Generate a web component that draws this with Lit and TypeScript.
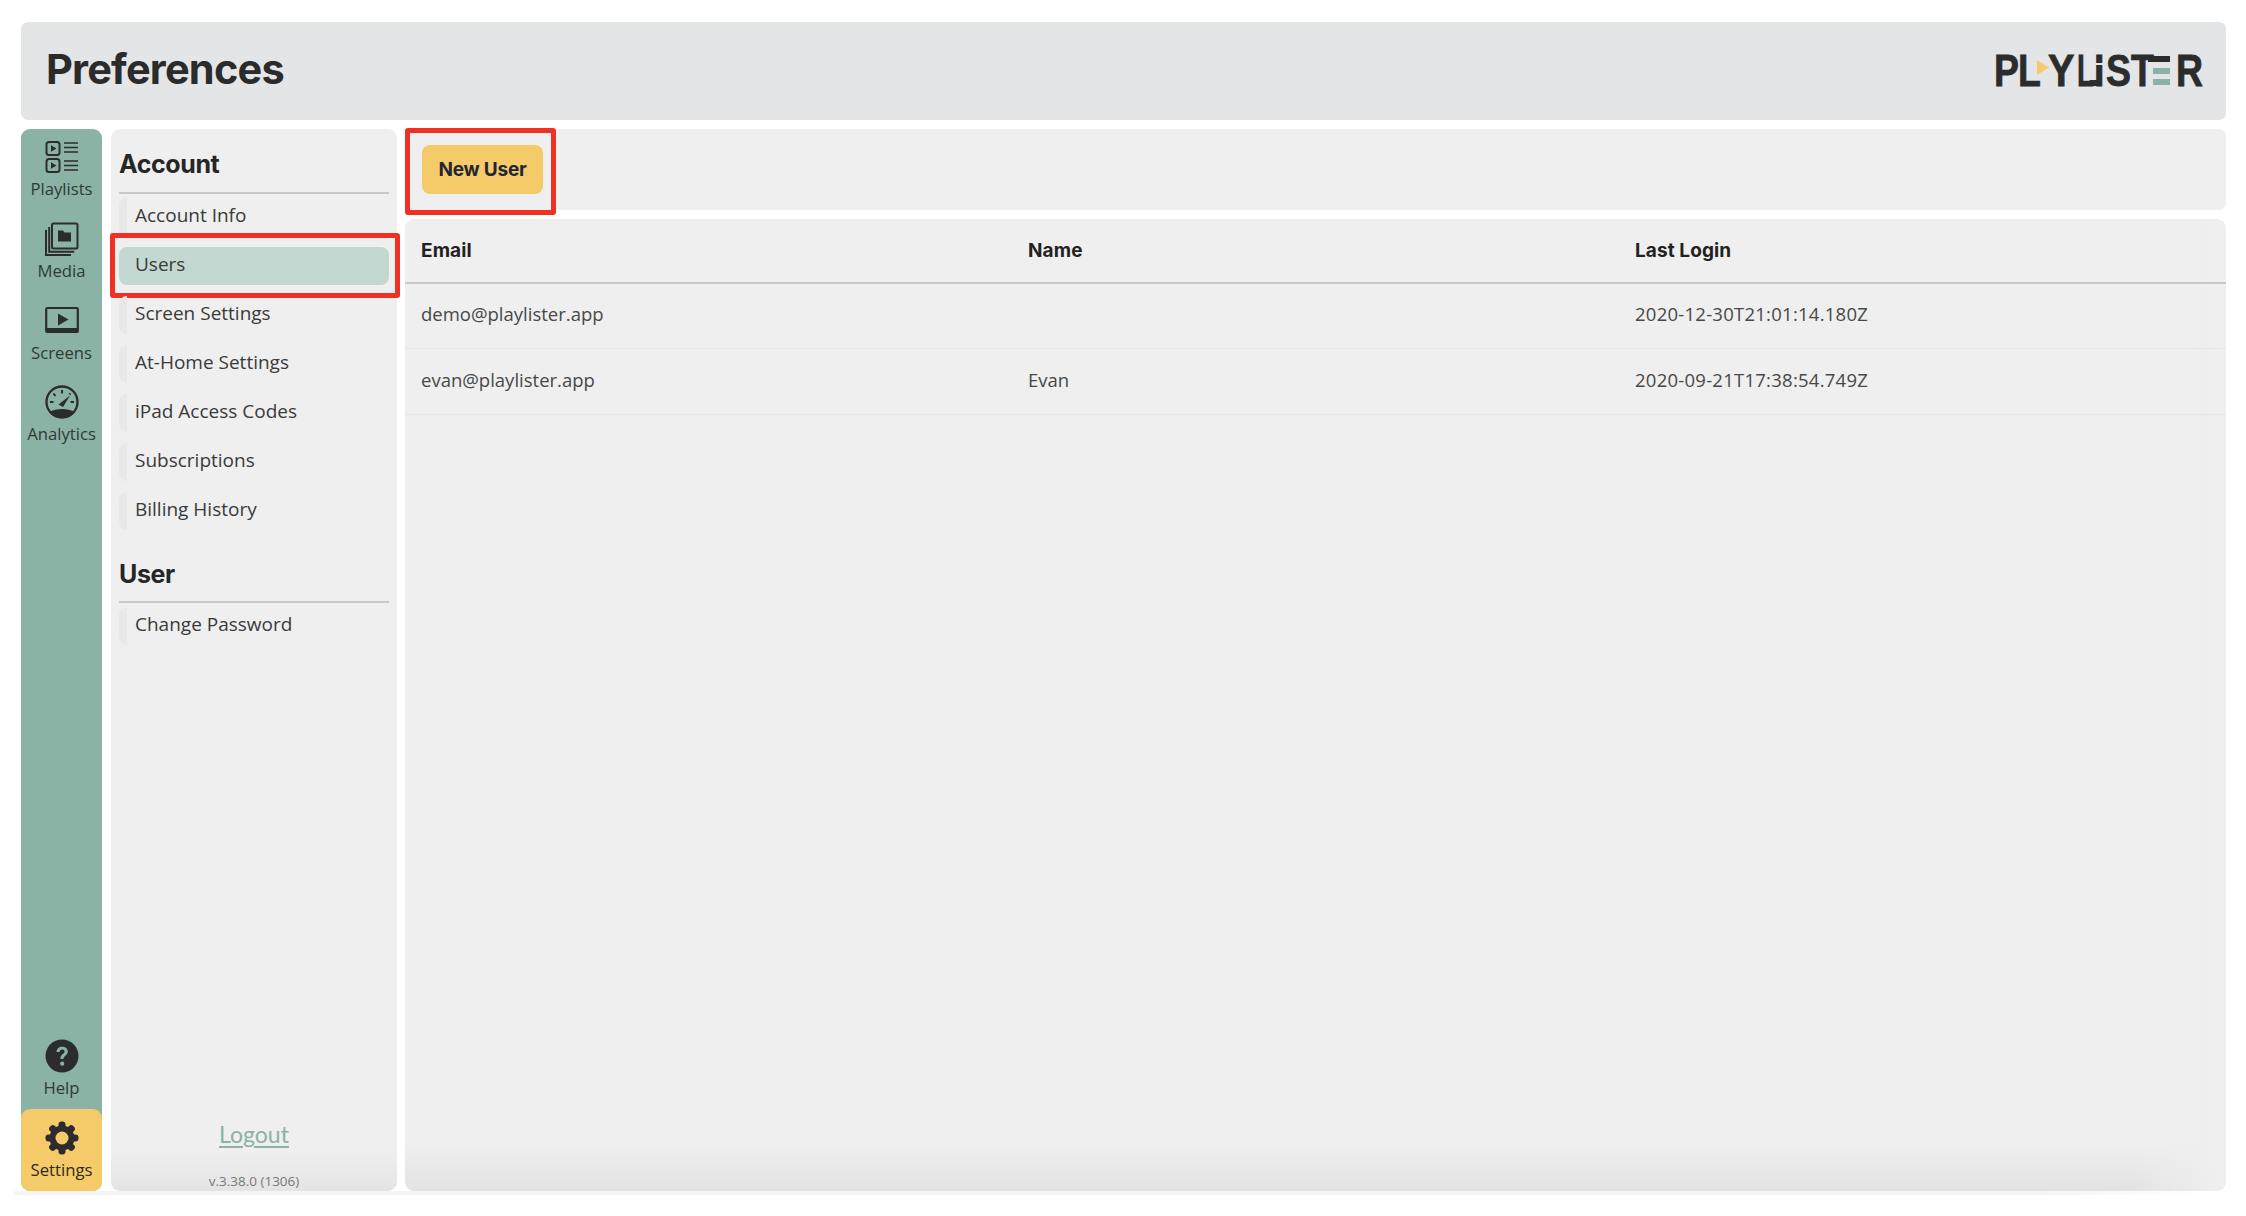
import { LitElement, html, css, svg } from "lit";
import { customElement } from "lit/decorators.js";

const ICONS: Record<string, unknown> = {
  playlists: svg`<svg viewBox="0 0 34 34" width="34" height="34" fill="none" stroke="#2c2c2e"><rect x="1.500" y="2" width="13" height="13" rx="2.500" stroke-width="2"/><path d="M6 5.300l5.500 3.200L6 11.700z" fill="#2c2c2e" stroke="none"/><rect x="1.500" y="19" width="13" height="13" rx="2.500" stroke-width="2"/><path d="M6 22.300l5.500 3.200L6 28.700z" fill="#2c2c2e" stroke="none"/><path d="M19 3h14M19 7.500h14M19 12h14M19 21h14M19 25.500h14M19 30h14" stroke-width="1.700"/></svg>`,
  media: svg`<svg viewBox="0 0 34 34" width="34" height="34" fill="none" stroke="#2c2c2e" stroke-width="2"><rect x="7" y="1.500" width="25.500" height="25" rx="1.500"/><path d="M4.200 5v24.700h25M1 8v25h25" /><path d="M13 8.500h5l1.500 2H26v9H13z" fill="#2c2c2e" stroke="none"/></svg>`,
  screens: svg`<svg viewBox="0 0 34 34" width="34" height="34" fill="none"><rect x="1.200" y="4" width="31.600" height="24" rx="1" stroke="#2c2c2e" stroke-width="2.200"/><rect x="1" y="24" width="32" height="5" fill="#2c2c2e"/><path d="M13 9.500l10.500 6L13 21.500z" fill="#2c2c2e"/></svg>`,
  analytics: svg`<svg viewBox="0 0 34 34" width="34" height="34" fill="none" stroke="#2c2c2e"><circle cx="17" cy="17" r="15.500" stroke-width="2.300"/><path d="M4 27c4-2 8-3 13-3s9 1 13 3c-3 4-8 6-13 6S7 31 4 27z" fill="#2c2c2e" stroke="none"/><path d="M13.500 19.500L25 10.500 18 22z" fill="#2c2c2e" stroke="none"/><path d="M17 5v3.500M8.500 8.500l2 2.500M5 17h3.500M25.500 8.500l-1 1M29 17h-3.500" stroke-width="2"/></svg>`,
  help: svg`<svg viewBox="0 0 34 34" width="34" height="34"><circle cx="17" cy="17" r="16.500" fill="#2c2c2e"/><path d="M11.500 13c0-3.300 2.500-5.300 5.700-5.300 3.200 0 5.600 2 5.600 4.800 0 4-4.300 4-4.300 7.500h-3.100c0-5 4.200-4.800 4.200-7.400 0-1.200-1-2.100-2.400-2.100-1.500 0-2.500 1-2.600 2.500z" fill="#8ab3a5"/><circle cx="17.200" cy="24.700" r="2.100" fill="#8ab3a5"/></svg>`,
  settings: svg`<svg viewBox="0 0 34 34" width="34" height="34"><g fill="#2c2c2e"><circle cx="17" cy="17" r="12.500"/>${[0, 45, 90, 135, 180, 225, 270, 315].map(
    (a) => svg`<rect x="13.500" y="0.500" width="7" height="8" rx="3" transform="rotate(${a} 17 17)"/>`
  )}</g><circle cx="17" cy="17" r="6.500" fill="#f5ca68"/></svg>`,
};

@customElement("app-root")
export class AppRoot extends LitElement {
  static styles = css`
    :host {
      display: block;
      height: 1216px;
      box-sizing: border-box;
      padding: 22px 20px 25px 21px;
      background: #fff;
      font-family: "Open Sans", "Liberation Sans", sans-serif;
      color: #3a3a3a;
      overflow: hidden;
    }
    .page {
      height: 100%;
      display: grid;
      grid-template-rows: 97.500px 1fr;
      gap: 9px;
    }
    .header {
      background: #e4e5e7;
      border-radius: 7px;
      display: flex;
      align-items: center;
      justify-content: space-between;
      padding: 0 24px 0 25px;
    }
    h1 {
      margin: 0 0 3px;
      font: 700 41.500px/1 Inter, "Liberation Sans", sans-serif;
      letter-spacing: -0.800px;
      color: #2b2b2b;
    }
    .logo {
      display: flex;
      align-items: center;
      width: 206px;
      height: 34px;
      font: 700 44px/34px "Liberation Sans", sans-serif;
      color: #2c2c2c;
      -webkit-text-stroke: 0.800px #2c2c2c;
    }
    .logo span {
      display: block;
      flex: none;
      transform: scaleX(0.85);
      transform-origin: left center;
    }
    .logo svg { display: block; flex: none; }
    .logo .p { margin-left: -2.500px; width: 24px; }
    .logo .l1 { width: 19.500px; }
    .logo .tri { margin-bottom: 6px; margin-right: -1px; }
    .logo .y { width: 28.500px; transform: scaleX(0.9); }
    .logo .l2 { width: 17px; transform: scaleX(0.64); }
    .logo .i { width: 12px; position: relative; }
    .logo .i::before {
      content: "";
      position: absolute;
      left: -5px;
      width: 10px;
      bottom: 2px;
      height: 6px;
      background: #2c2c2c;
    }
    .logo .i::after {
      content: "";
      position: absolute;
      left: -1px;
      right: -1px;
      top: 9px;
      height: 2px;
      background: #e4e5e7;
    }
    .logo .s { width: 25.500px; }
    .logo .t { width: 17px; }
    .logo .e { margin-right: 5.500px; }
    .logo .r { width: 26.500px; }
    .body {
      position: relative;
      min-height: 0;
      display: grid;
      grid-template-columns: 81px 286px 1fr;
      gap: 9px;
    }
    .body > :nth-child(3) { margin-left: -1px; }
    .body::after {
      content: "";
      position: absolute;
      left: -7px;
      right: 20px;
      bottom: -4px;
      height: 4px;
      background: linear-gradient(90deg, #f4f4f4 92%, #fff);
    }
    .rail {
      background: #8ab3a5;
      border-radius: 9px;
      display: flex;
      flex-direction: column;
      overflow: hidden;
    }
    .rail-gap { flex: 1; }
    .rail-item {
      height: 81.800px;
      flex: none;
      box-sizing: border-box;
      padding-top: 11.500px;
      display: flex;
      flex-direction: column;
      align-items: center;
      gap: 5px;
      font-size: 16.700px;
      line-height: 20px;
      color: #2f3a37;
    }
    .rail-item svg { display: block; }
    .rail-item.on {
      background: #f5ca68;
      border-radius: 9px;
      color: #2e2a1c;
    }
    .panel {
      background: linear-gradient(#efefef calc(100% - 40px), #e4e4e4);
      border-radius: 9px;
    }
    .table {
      background:
        linear-gradient(90deg, rgba(239, 239, 239, 0) calc(100% - 90px), #efefef calc(100% - 10px)),
        linear-gradient(#efefef calc(100% - 46px), #e3e3e3);
    }
    .nav {
      display: flex;
      flex-direction: column;
      padding: 0 8px;
    }
    h2 {
      margin: 0 0 4px;
      height: 65px;
      box-sizing: border-box;
      padding-top: 16px;
      font: 700 25px/38px Inter, "Liberation Sans", sans-serif;
      letter-spacing: -0.400px;
      color: #262626;
      border-bottom: 2px solid #c8c8c8;
    }
    h2.second { margin-top: 9px; height: 64px; padding-top: 16px; }
    .items { display: flex; flex-direction: column; gap: 11px; }
    .item {
      position: relative;
      height: 38px;
      border-radius: 8px;
      padding-left: 16px;
      font-size: 19px;
      line-height: 35px;
      background: linear-gradient(90deg, #e8e8e8 8px, transparent 8px);
    }
    .item.on { background: #c2d8d1; }
    .red::after {
      content: "";
      position: absolute;
      border: 5px solid #ee3124;
      border-radius: 3px;
      box-sizing: border-box;
    }
    .item.red::after { left: -9px; right: -11px; top: -14px; bottom: -13px; }
    .foot {
      margin-top: auto;
      display: flex;
      flex-direction: column;
      align-items: center;
    }
    .logout {
      font: 400 23px/32px Lato, "Open Sans", sans-serif;
      color: #8ab3a5;
      text-decoration: underline;
      text-underline-offset: 3px;
    }
    .version {
      font-size: 13.500px;
      line-height: 20px;
      color: #777;
      margin-top: 21px;
    }
    .main {
      min-height: 0;
      display: grid;
      grid-template-rows: 81px 1fr;
      gap: 9px;
    }
    .bar {
      background: #efefef;
      border-radius: 0 7px 7px 0;
      display: flex;
      align-items: center;
      padding-left: 17px;
    }
    .btn {
      position: relative;
      width: 121px;
      height: 49px;
      background: #f5ca68;
      border-radius: 8px;
      display: flex;
      align-items: center;
      justify-content: center;
      font: 700 19px/1 Inter, "Liberation Sans", sans-serif;
      letter-spacing: -0.200px;
      color: #1f2730;
    }
    .btn.red::after { left: -17px; right: -13px; top: -17px; bottom: -21px; }
    .row {
      display: grid;
      grid-template-columns: repeat(3, 1fr);
      align-items: center;
      font-size: 18.500px;
    }
    .row > div { padding-left: 16px; }
    .row.head {
      height: 63px;
      border-bottom: 2px solid #c8c8c8;
      font: 700 19px/1 Inter, "Liberation Sans", sans-serif;
      letter-spacing: 0.100px;
      color: #222;
    }
    .row.data {
      height: 60.500px;
      padding-bottom: 4px;
      border-bottom: 1px solid #e6e6e6;
      color: #484848;
    }
    .row.data > div:nth-child(3) { letter-spacing: 0.250px; }
  `;

  private rail(key: string, label: string, on = false) {
    return html`<div class="rail-item ${on ? "on" : ""}">${ICONS[key]}<span>${label}</span></div>`;
  }

  render() {
    const account = [
      "Account Info",
      "Users",
      "Screen Settings",
      "At-Home Settings",
      "iPad Access Codes",
      "Subscriptions",
      "Billing History",
    ];
    const rows = [
      ["demo@playlister.app", "", "2020-12-30T21:01:14.180Z"],
      ["evan@playlister.app", "Evan", "2020-09-21T17:38:54.749Z"],
    ];
    return html`
      <div class="page">
        <header class="header">
          <h1>Preferences</h1>
          <div class="logo" aria-label="Playlister">
            <span class="p">P</span><span class="l1">L</span>
            <svg class="tri" viewBox="0 0 12 15" width="12" height="15"><path d="M0 0l12 7.500L0 15z" fill="#f5ca68"/></svg>
            <span class="y">Y</span><span class="l2">L</span><span class="i">I</span><span class="s">S</span><span class="t">T</span>
            <svg class="e" viewBox="0 0 22 32" width="22" height="32"><path d="M0 1h22v6H0z" fill="#2c2c2c"/><path d="M5 13h17v6H5zM5 24h17v6H5z" fill="#8ab3a5"/></svg>
            <span class="r">R</span>
          </div>
        </header>
        <div class="body">
          <aside class="rail">
            ${this.rail("playlists", "Playlists")}
            ${this.rail("media", "Media")}
            ${this.rail("screens", "Screens")}
            ${this.rail("analytics", "Analytics")}
            <div class="rail-gap"></div>
            ${this.rail("help", "Help")}
            ${this.rail("settings", "Settings", true)}
          </aside>
          <nav class="panel nav">
            <h2>Account</h2>
            <div class="items">
              ${account.map(
                (a) => html`<div class="item ${a === "Users" ? "on red" : ""}">${a}</div>`
              )}
            </div>
            <h2 class="second">User</h2>
            <div class="items"><div class="item">Change Password</div></div>
            <div class="foot">
              <span class="logout">Logout</span>
              <span class="version">v.3.38.0 (1306)</span>
            </div>
          </nav>
          <section class="main">
            <div class="bar"><div class="btn red">New User</div></div>
            <div class="panel table">
              <div class="row head"><div>Email</div><div>Name</div><div>Last Login</div></div>
              ${rows.map(
                (r) => html`<div class="row data">${r.map((c) => html`<div>${c}</div>`)}</div>`
              )}
            </div>
          </section>
        </div>
      </div>
    `;
  }
}
